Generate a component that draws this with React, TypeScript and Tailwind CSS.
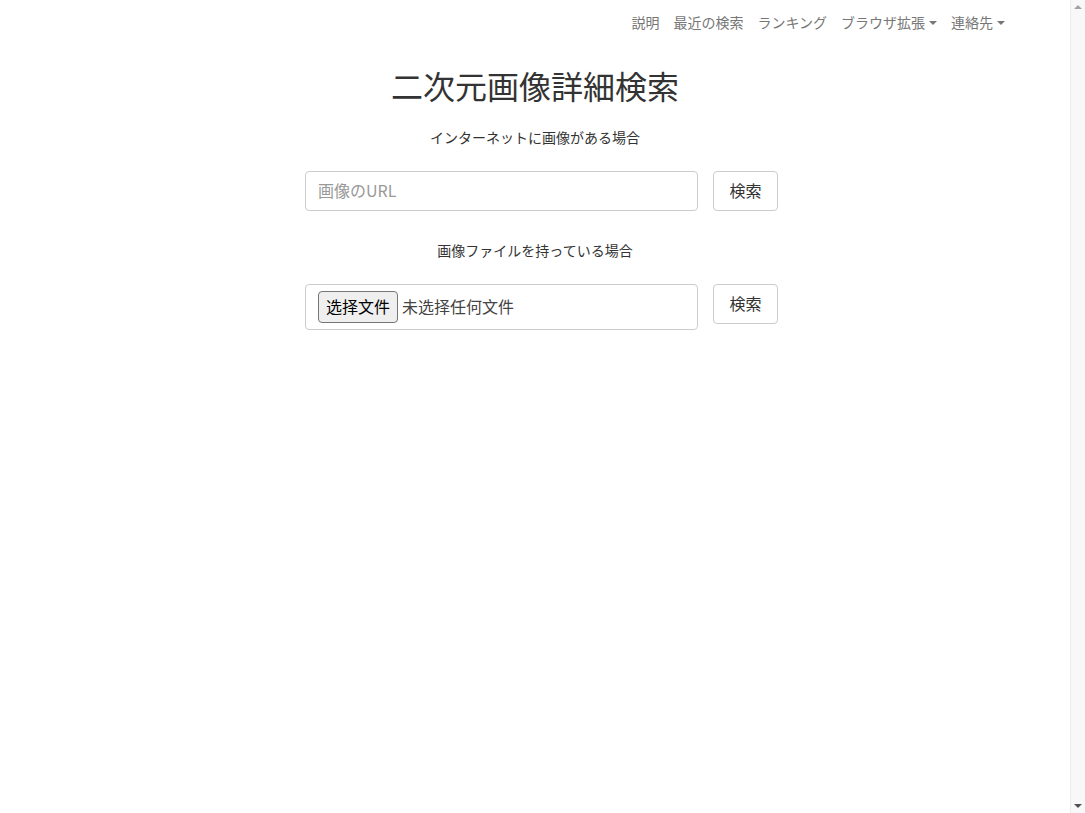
const jp = { fontFamily: '"Noto Sans CJK JP", "Noto Sans", sans-serif' };
const sc = { fontFamily: '"Noto Sans CJK SC", "Noto Sans", sans-serif' };

const navItems = [
  { label: "説明" },
  { label: "最近の検索" },
  { label: "ランキング" },
  { label: "ブラウザ拡張", dropdown: true },
  { label: "連絡先", dropdown: true },
];

function Caret() {
  return <span className="ml-1 inline-block h-0 w-0 border-x-4 border-t-4 border-x-transparent border-t-[#777]" />;
}

function SearchButton() {
  return (
    <button className="h-[40px] w-[65px] rounded border border-[#ccc] bg-white pb-[3px] text-[16px] text-[#333]">
      検索
    </button>
  );
}

export default function App() {
  return (
    <div className="flex h-[813px] bg-white text-[#333]" style={jp}>
      <div className="flex flex-1 flex-col">
        <nav className="h-[45px]">
          <ul className="flex h-full items-center justify-end gap-[14px] pr-[65px] text-[14px] text-[#777]">
            {navItems.map((item, index) => (
              <li key={index} className="flex items-center">
                {item.label}
                {item.dropdown && <Caret />}
              </li>
            ))}
          </ul>
        </nav>

        <main className="flex flex-col items-center">
          <h1 className="mt-[18px] text-[32px] leading-[44px] font-normal">二次元画像詳細検索</h1>

          <p className="mt-[20px] text-[14px] leading-[20px]">インターネットに画像がある場合</p>
          <div className="mt-[24px] flex gap-[15px] pl-[13px]">
            <input
              className="h-[40px] w-[393px] rounded border border-[#ccc] px-3 pb-[3px] text-[16px] outline-none placeholder:text-[#999]"
              placeholder="画像のURL"
              style={jp}
            />
            <SearchButton />
          </div>

          <p className="mt-[29px] text-[14px] leading-[20px]">画像ファイルを持っている場合</p>
          <div className="mt-[24px] flex items-start gap-[15px] pl-[13px]">
            <div className="flex h-[46px] w-[393px] items-center rounded border border-[#ccc] px-3 text-[16px]" style={sc}>
              <span className="flex h-[32px] items-center rounded-sm border border-[#767676] bg-[#efefef] px-[7px] pb-[3px] text-black">
                选择文件
              </span>
              <span className="ml-1 pb-[3px] text-[#444]">未选择任何文件</span>
            </div>
            <SearchButton />
          </div>
        </main>
      </div>

      {/* page scrollbar */}
      <div className="flex w-[15px] flex-col items-center justify-between border-l border-[#ececec] bg-[#f8f8f8] py-[5px]">
        <span className="h-0 w-0 border-x-4 border-b-4 border-x-transparent border-b-[#a3a3a3]" />
        <span className="h-0 w-0 border-x-4 border-t-4 border-x-transparent border-t-[#505050]" />
      </div>
    </div>
  );
}
